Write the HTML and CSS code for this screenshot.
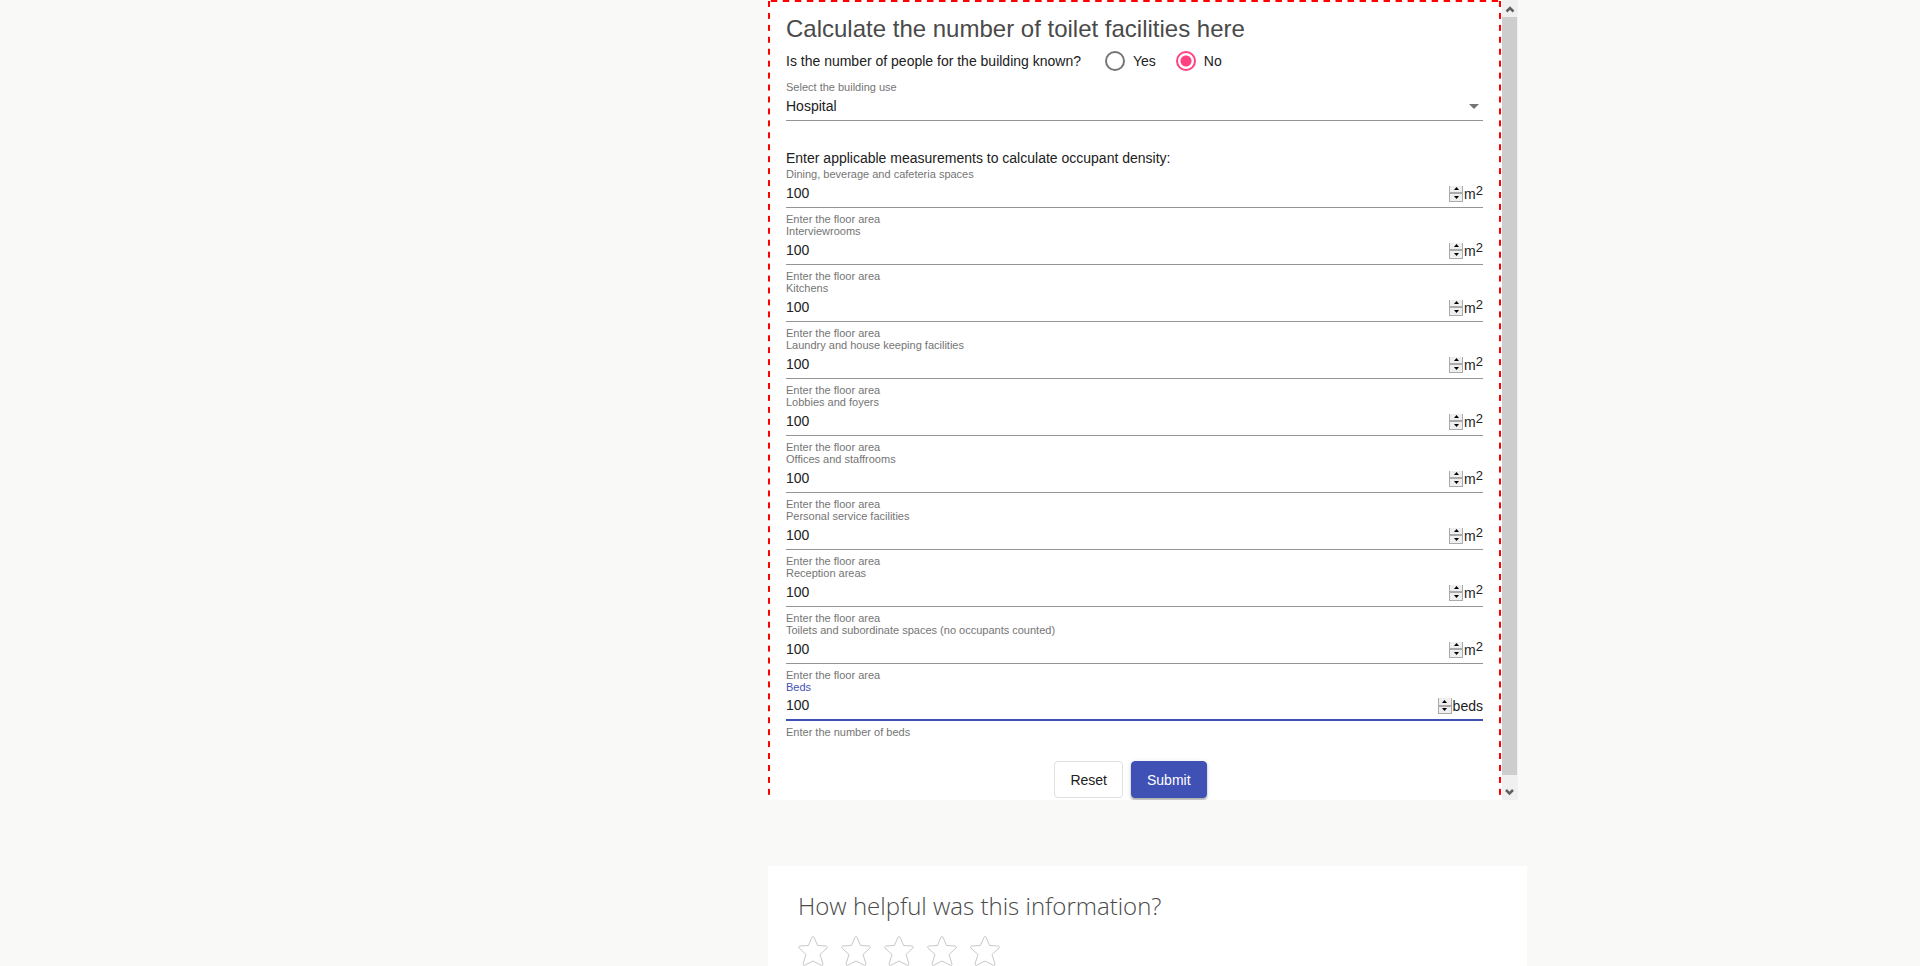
FILE: index.html
```html
<!DOCTYPE html>
<html lang="en">
<head>
<meta charset="utf-8">
<title>Toilet calculator</title>
<link rel="stylesheet" href="styles.css">
</head>
<body>
<main class="page">
  <div class="scroller">
    <form class="panel">
      <h1 class="title">Calculate the number of toilet facilities here</h1>
      <fieldset class="known" aria-labelledby="known-q">
        <span class="question" id="known-q">Is the number of people for the building known?</span>
        <label class="choice"><input type="radio" name="known">Yes</label>
        <label class="choice"><input type="radio" name="known" checked>No</label>
      </fieldset>
      <div class="use">
        <label class="label" for="use">Select the building use</label>
        <div class="select-row">
          <select id="use"><option>Hospital</option></select>
          <svg class="arrow" viewBox="0 0 10 5" aria-hidden="true"><path d="M0 0h10L5 5z"/></svg>
        </div>
      </div>
      <p class="intro">Enter applicable measurements to calculate occupant density:</p>
      <div id="fields"></div>
      <div class="actions">
        <button class="btn" type="reset">Reset</button>
        <button class="btn primary" type="button">Submit</button>
      </div>
    </form>
    <div class="scrollbar" aria-hidden="true">
      <svg class="scroll-end" viewBox="0 0 16 17"><path d="M4.500 11.500L8 8l3.500 3.500"/></svg>
      <div class="thumb"></div>
      <svg class="scroll-end tall" viewBox="0 0 16 25"><path d="M4 15l3.500 3.500L11 15"/></svg>
    </div>
  </div>
  <section class="feedback">
    <h2 class="feedback-title">How helpful was this information?</h2>
    <div class="stars" id="stars"></div>
  </section>
</main>
<script src="app.js"></script>
</body>
</html>
```
FILE: styles.css
```css
* { box-sizing: border-box; }
body {
  margin: 0;
  background: #f9f9f8;
  color: #212121;
  font: 14px/16px "Liberation Sans", Arial, sans-serif;
}
.page {
  display: flex;
  flex-direction: column;
  min-height: 100vh;
  margin-left: 40%;
  width: 39.53%;
}
.scroller { display: flex; margin-right: 9px; background: #fff; }
.panel {
  flex: 1;
  margin-right: 1px;
  padding: 12px 18px 2px;
  overflow: hidden;
  background:
    linear-gradient(90deg, transparent 3px, #f00 3px 9px, transparent 9px) 0 0 / 12px 2px round no-repeat,
    linear-gradient(transparent 1px, #f00 1px 7px, transparent 7px) 0 0 / 2px 12px no-repeat round,
    linear-gradient(transparent 1px, #f00 1px 7px, transparent 7px) 100% 0 / 2px 12px no-repeat round,
    #fff;
}
.title { margin: 0; font-size: 24px; line-height: 34px; font-weight: 400; color: #4a4a4a; }
.known { display: flex; align-items: center; height: 30px; margin: 0; padding: 0; border: 0; }
.question { margin-right: 24px; }
.choice { display: flex; align-items: center; gap: 8px; margin-right: 20px; }
.choice input {
  appearance: none;
  width: 20px;
  height: 20px;
  margin: 0;
  border: 2px solid #757575;
  border-radius: 50%;
}
.choice input:checked {
  border-color: #ff4081;
  background: radial-gradient(circle, #ff4081 5px, transparent 6px);
}
.label { display: block; font-size: 11px; line-height: 12px; color: #757575; }
.use { margin-top: 5px; }
.select-row { display: flex; align-items: center; height: 28px; border-bottom: 1px solid #949494; }
.select-row select {
  appearance: none;
  flex: 1;
  margin: 0 -10px 0 0;
  padding: 0 0 2px;
  border: 0;
  outline: 0;
  background: none;
  color: inherit;
  font: inherit;
}
.arrow { width: 10px; height: 5px; margin-right: 4px; fill: #757575; }
.intro { margin: 29px 0 2px; }
.row { display: flex; align-items: center; height: 28px; border-bottom: 1px solid #949494; }
.row input {
  appearance: textfield;
  flex: 1;
  min-width: 0;
  padding: 0 0 2px;
  border: 0;
  outline: 0;
  background: none;
  color: inherit;
  font: inherit;
}
.row input::-webkit-inner-spin-button { appearance: none; margin: 0; }
.spinner { display: grid; width: 14px; height: 16px; margin-right: 1px; border: 1px solid #aaa; border-top: 0; }
.spinner button { display: flex; align-items: center; justify-content: center; padding: 0; border: 0; background: #efefef; }
.spinner button + button { border-top: 2px solid #aaa; }
.spinner svg { width: 5px; height: 3px; fill: #000; }
.unit { line-height: 18px; }
.unit sup { font-size: 13px; line-height: 0; vertical-align: 4px; }
.hint { margin: 6px 0 0; font-size: 11px; line-height: 11px; color: #757575; }
.focused .label { color: #3f51b5; }
.focused .row { border-bottom: 2px solid #3f51b5; }
.actions { display: flex; justify-content: center; margin-top: 23px; }
.btn {
  height: 37px;
  margin-right: 8px;
  padding: 0 15px;
  border: 1px solid #e0e0e0;
  border-radius: 4px;
  background: #fff;
  color: inherit;
  font: inherit;
}
.primary {
  border-color: #3f51b5;
  background: #3f51b5;
  color: #fff;
  box-shadow: 0 2px 2px rgba(0, 0, 0, .25), 0 1px 4px rgba(0, 0, 0, .15);
}
.scrollbar { display: flex; flex-direction: column; width: 16px; background: #f0f0f0; }
.thumb { flex: 1; margin-right: 1px; background: #cdcdcd; }
.scroll-end { width: 16px; height: 17px; fill: none; stroke: #606060; stroke-width: 2.500; }
.tall { height: 25px; }
.feedback { flex: 1; margin-top: 66px; padding: 22px 30px 0; background: #fff; }
.feedback-title { margin: 0; font: 300 24px/36px "Open Sans", sans-serif; color: #4a4a4a; }
.stars { display: flex; gap: 13px; margin-top: 12px; }
.star { width: 30px; height: 30px; padding: 0; border: 0; background: none; }
.star svg { display: block; width: 30px; height: 30px; fill: #fff; stroke: #c8c8c8; stroke-linejoin: round; }
```
FILE: app.js
```js
const areas = [
  "Dining, beverage and cafeteria spaces", "Interviewrooms", "Kitchens",
  "Laundry and house keeping facilities", "Lobbies and foyers", "Offices and staffrooms",
  "Personal service facilities", "Reception areas",
  "Toilets and subordinate spaces (no occupants counted)"
];
const field = (name, i, unit, hint, extra) => `
  <div class="field ${extra}">
    <label class="label" for="f${i}">${name}</label>
    <div class="row">
      <input id="f${i}" type="number" value="100">
      <span class="spinner">
        <button type="button" aria-label="Increase"><svg viewBox="0 0 5 3"><path d="M0 3h5L2.500 0z"/></svg></button>
        <button type="button" aria-label="Decrease"><svg viewBox="0 0 5 3"><path d="M0 0h5L2.500 3z"/></svg></button>
      </span>
      <span class="unit">${unit}</span>
    </div>
    <p class="hint">${hint}</p>
  </div>`;
document.getElementById("fields").innerHTML =
  areas.map((a, i) => field(a, i, "m<sup>2</sup>", "Enter the floor area", "")).join("") +
  field("Beds", areas.length, "beds", "Enter the number of beds", "focused");

document.getElementById("stars").innerHTML = [1, 2, 3, 4, 5].map(n => `
  <button class="star" type="button" aria-label="${n} stars"><svg viewBox="0 0 30 30"><path d="M14 1.200q1-1.400 2 0L19.600 9.500 28.500 10q1.600.6.500 2L22 18.500 25 28q0 1.700-1.600 1.300L15 25 6.600 29.300Q5 29.700 5 28L8 18.500 1 12q-1.100-1.400.5-2L10.400 9.500z"/></svg></button>`).join("");
```
